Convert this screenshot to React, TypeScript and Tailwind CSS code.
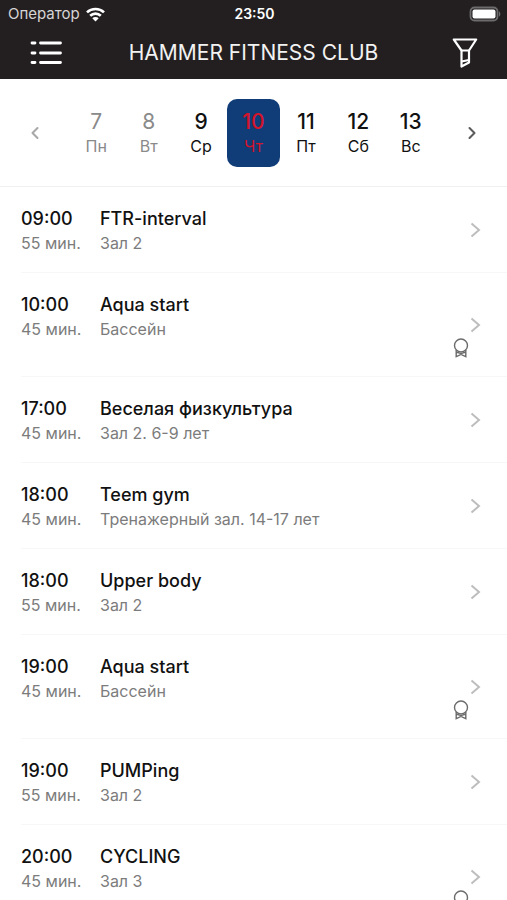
import React, { useState } from "react";
import { ChevronLeft, ChevronRight } from "lucide-react";

interface Day {
  date: number;
  weekday: string;
  past?: boolean;
}

interface Lesson {
  id: number;
  time: string;
  duration: string;
  title: string;
  place: string;
  badge?: boolean;
}

const days: Day[] = [
  { date: 7, weekday: "Пн", past: true },
  { date: 8, weekday: "Вт", past: true },
  { date: 9, weekday: "Ср" },
  { date: 10, weekday: "Чт" },
  { date: 11, weekday: "Пт" },
  { date: 12, weekday: "Сб" },
  { date: 13, weekday: "Вс" },
];

const lessons: Lesson[] = [
  { id: 1, time: "09:00", duration: "55 мин.", title: "FTR-interval", place: "Зал 2" },
  { id: 2, time: "10:00", duration: "45 мин.", title: "Aqua start", place: "Бассейн", badge: true },
  { id: 3, time: "17:00", duration: "45 мин.", title: "Веселая физкультура", place: "Зал 2. 6-9 лет" },
  { id: 4, time: "18:00", duration: "45 мин.", title: "Teem gym", place: "Тренажерный зал. 14-17 лет" },
  { id: 5, time: "18:00", duration: "55 мин.", title: "Upper body", place: "Зал 2" },
  { id: 6, time: "19:00", duration: "45 мин.", title: "Aqua start", place: "Бассейн", badge: true },
  { id: 7, time: "19:00", duration: "55 мин.", title: "PUMPing", place: "Зал 2" },
  { id: 8, time: "20:00", duration: "45 мин.", title: "CYCLING", place: "Зал 3", badge: true },
];

function WifiIcon() {
  return (
    <svg width="19" height="15" viewBox="0 0 19 15" fill="none" stroke="#fff" strokeWidth="2.6">
      <path d="M1 5.4C5.6 0.9 13.4 0.9 18 5.4" />
      <path d="M4.2 8.8C7.2 5.9 11.8 5.9 14.8 8.8" />
      <path d="M9.5 14.4L6.3 11.2C8 9.7 11 9.7 12.7 11.2Z" fill="#fff" stroke="none" />
    </svg>
  );
}

function BatteryIcon() {
  return (
    <svg width="32" height="16" viewBox="0 0 32 16" fill="none">
      <rect x="1.5" y="1.5" width="27" height="13" rx="4" stroke="#6d6b6c" strokeWidth="1.8" />
      <rect x="3.5" y="3.5" width="23" height="9" rx="2" fill="#fff" />
      <path d="M30 5.5V10.5C31.8 10 31.8 6 30 5.5Z" fill="#6d6b6c" />
    </svg>
  );
}

function MenuIcon() {
  return (
    <svg width="34" height="26" viewBox="0 0 34 26" stroke="#fff" strokeWidth="2.8" strokeLinecap="round">
      <path d="M3 3H6M11.5 3H31.5M3 13H6M11.5 13H31.5M3 22.5H6M11.5 22.5H31.5" />
    </svg>
  );
}

function FilterIcon() {
  return (
    <svg width="26" height="30" viewBox="0 0 26 30" fill="none" stroke="#fff" strokeWidth="2.2" strokeLinejoin="round">
      <path d="M1.8 1.5H24.2L17 12.5V24.5L9.5 28.5V12.5Z" />
      <path d="M9.5 12.5H17M9.5 23.5L17 22" />
    </svg>
  );
}

function BadgeIcon() {
  return (
    <svg width="16" height="20" viewBox="0 0 16 20" fill="none" stroke="#6b6b6b" strokeWidth="1.4">
      <circle cx="8" cy="7.5" r="6.5" />
      <path d="M3.2 12V18.6L8 16.4L12.8 18.6V12M3.2 14L8 15.6L12.8 14" />
    </svg>
  );
}

function LessonRow({ lesson }: { lesson: Lesson }) {
  return (
    <li className="pl-[21px]">
      <a
        href={`#lesson-${lesson.id}`}
        className={`relative flex items-center border-b border-[#f7f7f7] ${lesson.badge ? "h-[104px]" : "h-[86px]"}`}
      >
        <div className="flex flex-1 self-start pt-5">
          <div className="w-[79px]">
            <div className="text-lg leading-6 font-medium text-[#111]">{lesson.time}</div>
            <div className="text-base leading-6 text-[#7c7c7c]">{lesson.duration}</div>
          </div>
          <div>
            <h2 className="text-lg leading-6 font-medium text-[#111]">{lesson.title}</h2>
            <p className="text-base leading-6 text-[#7c7c7c]">{lesson.place}</p>
          </div>
        </div>
        <svg className="mr-[26px]" width="11" height="16" viewBox="0 0 11 16" fill="none" stroke="#bdbdbd" strokeWidth="2">
          <path d="M1.5 1.5L9 8L1.5 14.5" />
        </svg>
        {lesson.badge && (
          <span className="absolute right-[38px] bottom-[18px]">
            <BadgeIcon />
          </span>
        )}
      </a>
    </li>
  );
}

export default function App() {
  const [selected, setSelected] = useState(10);

  return (
    <div className="flex h-screen flex-col overflow-hidden bg-white font-['Inter','Noto_Sans',sans-serif]">
      <header className="bg-[#231f20] text-white">
        {/* Status bar */}
        <div className="grid h-7 grid-cols-3 items-center pr-1.5 pl-2">
          <div className="flex items-center gap-1.5 text-[15px] text-[#d6d5d5]">
            Оператор
            <WifiIcon />
          </div>
          <div className="text-center text-sm font-semibold">23:50</div>
          <div className="flex justify-end">
            <BatteryIcon />
          </div>
        </div>

        {/* Title bar */}
        <div className="flex h-[51px] items-center justify-between px-[29px] pb-0.5">
          <button type="button" aria-label="Меню" className="flex w-[34px]">
            <MenuIcon />
          </button>
          <h1 className="text-[21px] leading-7 text-[#f2f2f2]">HAMMER FITNESS CLUB</h1>
          <button type="button" aria-label="Фильтр" className="flex w-[34px] justify-end">
            <FilterIcon />
          </button>
        </div>
      </header>

      {/* Week picker */}
      <nav className="flex h-[108px] shrink-0 items-center border-b border-[#f0f0f0]">
        <button type="button" aria-label="Предыдущая неделя" className="flex w-[70px] justify-center text-[#a8a8a8]">
          <ChevronLeft size={20} strokeWidth={2.5} />
        </button>
        <div className="grid flex-1 grid-cols-7">
          {days.map((day) => {
            const active = day.date === selected;
            return (
              <button
                key={day.date}
                type="button"
                onClick={() => setSelected(day.date)}
                className={`flex h-[68px] flex-col items-center justify-center rounded-[10px] pt-0.5 ${
                  active ? "bg-[#103c78] text-[#d3142b]" : day.past ? "text-[#8a8a8a]" : "text-[#111]"
                }`}
              >
                <span className={`text-[21px] leading-6 ${day.past ? "" : "font-medium"}`}>{day.date}</span>
                <span className="text-base leading-6">{day.weekday}</span>
              </button>
            );
          })}
        </div>
        <button type="button" aria-label="Следующая неделя" className="flex w-[70px] justify-center text-[#5c5c5c]">
          <ChevronRight size={20} strokeWidth={2.5} />
        </button>
      </nav>

      <ul className="min-h-0 flex-1 overflow-y-auto [scrollbar-width:none]">
        {lessons.map((lesson) => (
          <LessonRow key={lesson.id} lesson={lesson} />
        ))}
      </ul>
    </div>
  );
}
